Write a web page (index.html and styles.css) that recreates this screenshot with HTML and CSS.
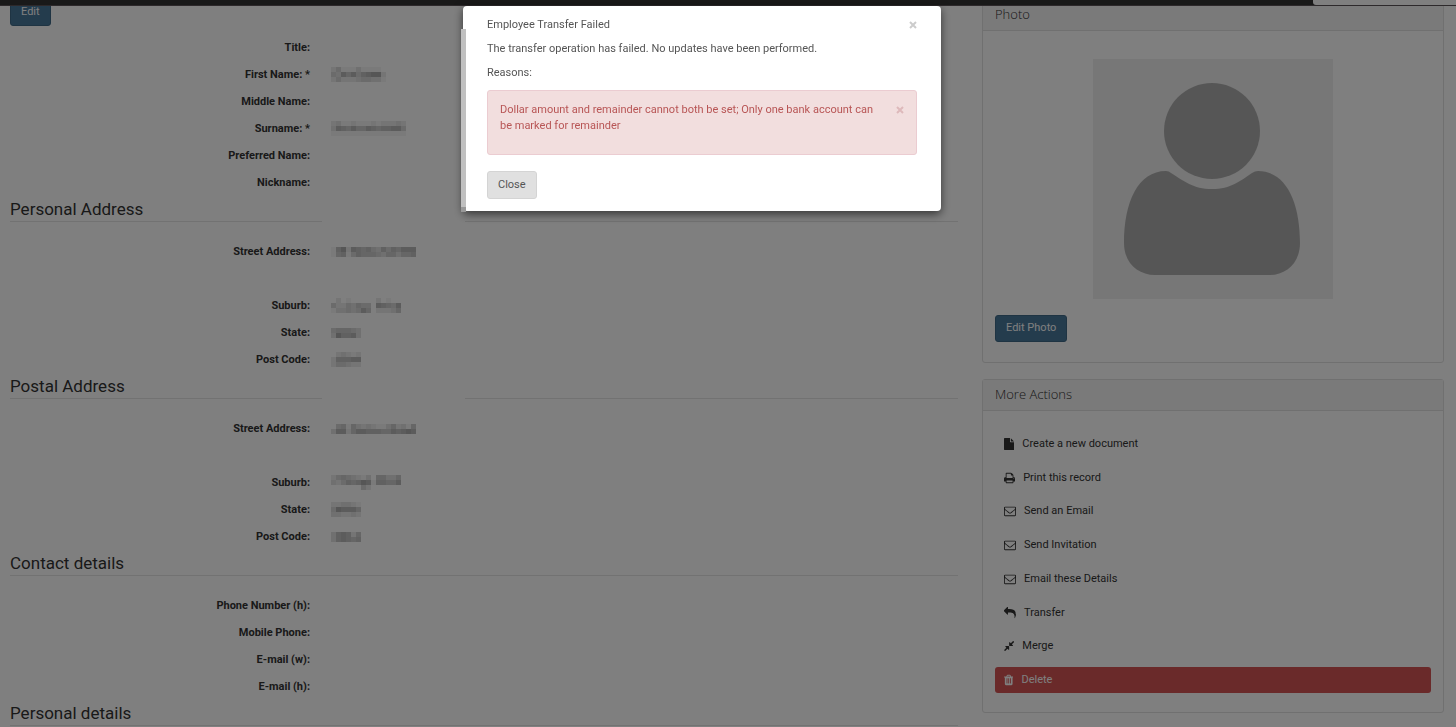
FILE: index.html
```html
<!DOCTYPE html>
<html lang="en">
<head>
<meta charset="utf-8">
<title>Employee Transfer Failed</title>
<link rel="stylesheet" href="styles.css">
</head>
<body>
<header class="navbar"><div class="navbar-search"></div></header>

<div class="page">
  <main class="record">
    <button class="btn btn-primary btn-top" type="button">Edit</button>
    <dl class="fields fields-first">
      <dt>Title:</dt><dd></dd>
      <dt>First Name: *</dt><dd><svg class="redacted" data-rows="24111311110 43757467882 24222344331"></svg></dd>
      <dt>Middle Name:</dt><dd></dd>
      <dt>Surname: *</dt><dd><svg class="redacted" data-rows="231121112122232 376575576566774 111111111111111"></svg></dd>
      <dt>Preferred Name:</dt><dd></dd>
      <dt>Nickname:</dt><dd></dd>
    </dl>
    <h2 class="legend legend-faded">Personal Address</h2>
    <dl class="fields">
      <dt>Street Address:</dt><dd><svg class="redacted" data-rows="16827656436465777 15614655543553556"></svg></dd>
      <dt class="after-gap">Suburb:</dt><dd class="after-gap"><svg class="redacted" data-rows="02010000020100 42243544076547 13343475022235"></svg></dd>
      <dt>State:</dt><dd><svg class="redacted" data-rows="455543 386673"></svg></dd>
      <dt>Post Code:</dt><dd><svg class="redacted" data-rows="023212 266677 244322"></svg></dd>
    </dl>
    <h2 class="legend legend-faded">Postal Address</h2>
    <dl class="fields">
      <dt>Street Address:</dt><dd><svg class="redacted" data-rows="04515323211352315 37725776665576787"></svg></dd>
      <dt class="after-gap">Suburb:</dt><dd class="after-gap"><svg class="redacted" data-rows="24543213055335 32465687166557 00000042000000"></svg></dd>
      <dt>State:</dt><dd><svg class="redacted" data-rows="223321 487775 332232"></svg></dd>
      <dt>Post Code:</dt><dd><svg class="redacted" data-rows="367625 367656"></svg></dd>
    </dl>
    <h2 class="legend">Contact details</h2>
    <dl class="fields">
      <dt>Phone Number (h):</dt><dd></dd>
      <dt>Mobile Phone:</dt><dd></dd>
      <dt>E-mail (w):</dt><dd></dd>
      <dt>E-mail (h):</dt><dd></dd>
    </dl>
    <h2 class="legend">Personal details</h2>
  </main>

  <aside class="sidebar">
    <section class="panel">
      <h3 class="panel-heading">Photo</h3>
      <div class="panel-body photo-body">
        <svg class="avatar" viewBox="0 0 240 240" role="img" aria-label="Employee photo">
          <rect width="240" height="240" fill="#eee"/>
          <circle cx="119" cy="72" r="48" fill="#adadad"/>
          <path fill="#adadad" d="M73 112C45 112 31 143 31 184C31 204 45 216 62 216H177C193 216 207 204 207 184C207 143 193 112 165 112Q162 112 159 114C147 122 138 130 119 130C100 130 91 122 78 114Q76 112 73 112Z"/>
        </svg>
        <button class="btn btn-primary" type="button">Edit Photo</button>
      </div>
    </section>

    <section class="panel">
      <h3 class="panel-heading">More Actions</h3>
      <ul class="actions">
        <li><a href="#"><svg viewBox="128 0 1536 1792"><path d="M1152 512v-472q22 14 36 28l408 408q14 14 28 36h-472zm-128 32q0 40 28 68t68 28h544v1056q0 40-28 68t-68 28h-1344q-40 0-68-28t-28-68v-1600q0-40 28-68t68-28h800v544z"/></svg>Create a new document</a></li>
        <li><a href="#"><svg viewBox="64 0 1664 1792"><path d="M448 1536h896v-256h-896v256zm0-640h896v-384h-160q-40 0-68-28t-28-68v-160h-640v640zm1152 64q0-26-19-45t-45-19-45 19-19 45 19 45 45 19 45-19 19-45zm128 0v416q0 13-9.500 22.500t-22.500 9.500h-224v160q0 40-28 68t-68 28h-960q-40 0-68-28t-28-68v-160h-224q-13 0-22.500-9.500t-9.500-22.500v-416q0-79 56.500-135.500t135.500-56.500h64v-544q0-40 28-68t68-28h672q40 0 88 20t76 48l152 152q28 28 48 76t20 88v256h64q79 0 135.500 56.500t56.500 135.500z"/></svg>Print this record</a></li>
        <li><a href="#"><svg viewBox="0 0 1792 1792"><use href="#envelope"/></svg>Send an Email</a></li>
        <li><a href="#"><svg viewBox="0 0 1792 1792"><use href="#envelope"/></svg>Send Invitation</a></li>
        <li><a href="#"><svg viewBox="0 0 1792 1792"><path id="envelope" d="M1664 1504v-768q-32 36-69 66-268 206-426 338-51 43-83 67t-86.500 48.500-102.500 24.500h-2q-48 0-102.500-24.500t-86.500-48.500-83-67q-158-132-426-338-37-30-69-66v768q0 13 9.500 22.500t22.500 9.500h1472q13 0 22.500-9.500t9.500-22.500zm0-1051v-24.500l-.5-13-3-12.500-5.500-9-9-7.500-14-2.500h-1472q-13 0-22.500 9.500t-9.500 22.500q0 168 147 284 193 152 401 317 6 5 35 29.500t46 37.500 44.500 31.500 50.500 27.500 43 9h2q20 0 43-9t50.500-27.500 44.500-31.500 46-37.500 35-29.500q208-165 401-317 54-43 100.500-115.500t46.500-131.500zm128-37v1088q0 66-47 113t-113 47h-1472q-66 0-113-47t-47-113v-1088q0-66 47-113t113-47h1472q66 0 113 47t47 113z"/></svg>Email these Details</a></li>
        <li><a href="#"><svg viewBox="0 0 1792 1792"><path d="M1792 1120q0 166-127 451-3 7-10.500 24t-13.500 30-13 22q-12 17-28 17-15 0-23.500-10t-8.500-25q0-9 2.500-26.500t2.500-23.500q5-68 5-123 0-112-19.500-200.500t-54-153.500-89-112-117-78-143.500-50-162.500-28-175.500-9h-224v256q0 26-19 45t-45 19-45-19l-512-512q-19-19-19-45t19-45l512-512q19-19 45-19t45 19 19 45v256h224q713 0 875 403 53 134 53 333z"/></svg>Transfer</a></li>
        <li><a href="#"><svg viewBox="128 0 1536 1792"><path d="M896 960v448q0 26-19 45t-45 19-45-19l-144-144-332 332q-10 10-23 10t-23-10l-114-114q-10-10-10-23t10-23l332-332-144-144q-19-19-19-45t19-45 45-19h448q26 0 45 19t19 45zm755-672q0 13-10 23l-332 332 144 144q19 19 19 45t-19 45-45 19h-448q-26 0-45-19t-19-45v-448q0-26 19-45t45-19 45 19l144 144 332-332q10-10 23-10t23 10l114 114q10 10 10 23z"/></svg>Merge</a></li>
        <li><a class="danger" href="#"><svg viewBox="192 0 1408 1792"><path d="M704 1376v-704q0-14-9-23t-23-9h-64q-14 0-23 9t-9 23v704q0 14 9 23t23 9h64q14 0 23-9t9-23zm256 0v-704q0-14-9-23t-23-9h-64q-14 0-23 9t-9 23v704q0 14 9 23t23 9h64q14 0 23-9t9-23zm256 0v-704q0-14-9-23t-23-9h-64q-14 0-23 9t-9 23v704q0 14 9 23t23 9h64q14 0 23-9t9-23zm-544-992h448l-48-117q-7-9-17-11h-317q-10 2-17 11zm928 32v64q0 14-9 23t-23 9h-96v948q0 83-47 143.500t-113 60.500h-832q-66 0-113-58.500t-47-141.500v-952h-96q-14 0-23-9t-9-23v-64q0-14 9-23t23-9h309l70-167q15-37 54-63t79-26h320q40 0 79 26t54 63l70 167h309q14 0 23 9t9 23z"/></svg>Delete</a></li>
      </ul>
    </section>
  </aside>
</div>

<div class="backdrop">
  <div class="modal" role="dialog" aria-labelledby="modal-title">
    <div class="modal-header">
      <h1 class="modal-title" id="modal-title">Employee Transfer Failed</h1>
      <button class="dismiss" type="button" aria-label="Close dialog"><svg viewBox="0 0 8 8"><path d="M1 1l6 6M7 1l-6 6"/></svg></button>
    </div>
    <p>The transfer operation has failed. No updates have been performed.</p>
    <p>Reasons:</p>
    <div class="alert" role="alert">
      <span>Dollar amount and remainder cannot both be set; Only one bank account can be marked for remainder</span>
      <button class="dismiss" type="button" aria-label="Dismiss alert"><svg viewBox="0 0 8 8"><path d="M1 1l6 6M7 1l-6 6"/></svg></button>
    </div>
    <button class="btn btn-default" type="button">Close</button>
  </div>
</div>
<script src="redact.js"></script>
</body>
</html>
```
FILE: styles.css
```css
* { box-sizing: border-box; }

body {
  margin: 0;
  height: 100vh;
  overflow: hidden;
  background: #fff;
  color: #333;
  font: 11px/16px Roboto, "Liberation Sans", sans-serif;
}

h1, h2, h3, p, dl, dd, ul { margin: 0; padding: 0; font-weight: 400; }

.navbar {
  position: fixed;
  z-index: 5;
  top: 0;
  left: 0;
  right: 0;
  height: 6px;
  display: flex;
  justify-content: flex-end;
  background: #333;
  border-bottom: 1px solid #5a5256;
}
.navbar-search {
  width: 143px;
  background: #fff;
  border-bottom-left-radius: 3px;
}

.page {
  display: grid;
  grid-template-columns: 948fr 462fr;
  gap: 24px;
  padding: 0 12px 0 10px;
}

.btn {
  padding: 5px 10px;
  border: 1px solid transparent;
  border-radius: 3px;
  font: inherit;
}
.btn-primary {
  padding: 4px 10px 5px;
  background: #48789a;
  border-color: #3f6986;
  color: #fff;
}
.btn-default { background: #e0e0e0; border-color: #d4d4d4; color: #555; }
.btn-top { display: block; height: 26px; padding: 3px 10px 6px; }

.fields {
  display: grid;
  grid-template-columns: 1fr 2fr;
  grid-auto-rows: minmax(27px, auto);
  padding-top: 16px;
}
.fields-first { padding-top: 8px; }
.fields dt {
  padding: 6px 16px 5px 0;
  text-align: right;
  font-weight: 700;
}
.fields dd {
  display: flex;
  align-items: center;
  padding: 0 5px;
}
.fields .after-gap { margin-top: 27px; }

.legend {
  height: 26px;
  padding-top: 2px;
  border-bottom: 1px solid #e5e5e5;
  font-size: 17px;
  line-height: 22px;
}
.legend-faded {
  border-image: linear-gradient(to right, #e5e5e5 33%, transparent 33%, transparent 48%, #e5e5e5 48%) 1;
}

.sidebar { margin-top: -1px; }
.panel {
  margin-bottom: 16px;
  border: 1px solid #e0e0e0;
  border-radius: 3px;
}
.panel-heading {
  padding: 5px 12px 7px;
  background: #f4f4f4;
  border-bottom: 1px solid #e0e0e0;
  font: 300 13px/18px "Open Sans", sans-serif;
}
.photo-body { padding: 28px 12px 20px; }
.avatar {
  display: block;
  width: 240px;
  margin: 0 auto 16px;
}

.actions {
  display: grid;
  grid-auto-rows: 1fr;
  gap: 8px;
  min-height: 301px;
  padding: 20px 12px 19px;
  list-style: none;
}
.actions a {
  display: flex;
  align-items: center;
  gap: 8px;
  height: 100%;
  padding: 0 9px;
  border-radius: 3px;
  color: #333;
  text-decoration: none;
}
.actions svg { height: 12px; fill: currentColor; }
.actions .danger { background: #d45454; color: #fff; }

.backdrop {
  position: fixed;
  z-index: 10;
  inset: 0;
  padding: 6px 52px 0 0;
  background: rgba(0, 0, 0, .5);
}
.modal {
  position: relative;
  width: 478px;
  margin: 0 auto;
  padding: 11px 24px 12px;
  background: #fff;
  border-radius: 4px;
  box-shadow: 0 3px 10px rgba(0, 0, 0, .6);
  color: #555;
}
.modal::before {
  content: "";
  position: absolute;
  top: 23px;
  bottom: -1px;
  left: -2px;
  width: 5px;
  background: linear-gradient(to top, #989898 5px, #c0c0c0 5px);
}
.modal-header { display: flex; justify-content: space-between; align-items: center; }
.modal-title { font-size: 11px; line-height: 16px; }
.modal p { margin-top: 8px; }

.dismiss {
  width: 8px;
  height: 8px;
  padding: 0;
  border: 0;
  background: none;
  color: #ccc;
}
.dismiss svg { display: block; fill: none; stroke: currentColor; stroke-width: 2; }

.alert {
  display: flex;
  justify-content: space-between;
  gap: 16px;
  margin: 9px 0 16px;
  padding: 11px 12px 20px;
  background: #f2dede;
  border: 1px solid #ebccd1;
  border-radius: 3px;
  color: #b85555;
}
.alert .dismiss { flex: none; margin-top: 4px; color: #deb9bb; }
```
FILE: redact.js
```js
// Draws hidden field values as blocks; each digit is the darkness of one 5px cell.
document.querySelectorAll('.redacted').forEach(function (svg) {
  var rows = svg.dataset.rows.split(' ');
  svg.setAttribute('width', rows[0].length * 5);
  svg.setAttribute('height', rows.length * 5);
  rows.forEach(function (row, y) {
    row.split('').forEach(function (level, x) {
      var cell = document.createElementNS('http://www.w3.org/2000/svg', 'rect');
      cell.setAttribute('x', x * 5);
      cell.setAttribute('y', y * 5);
      cell.setAttribute('width', 5);
      cell.setAttribute('height', 5);
      cell.setAttribute('fill-opacity', level * 0.04);
      svg.appendChild(cell);
    });
  });
});
```
